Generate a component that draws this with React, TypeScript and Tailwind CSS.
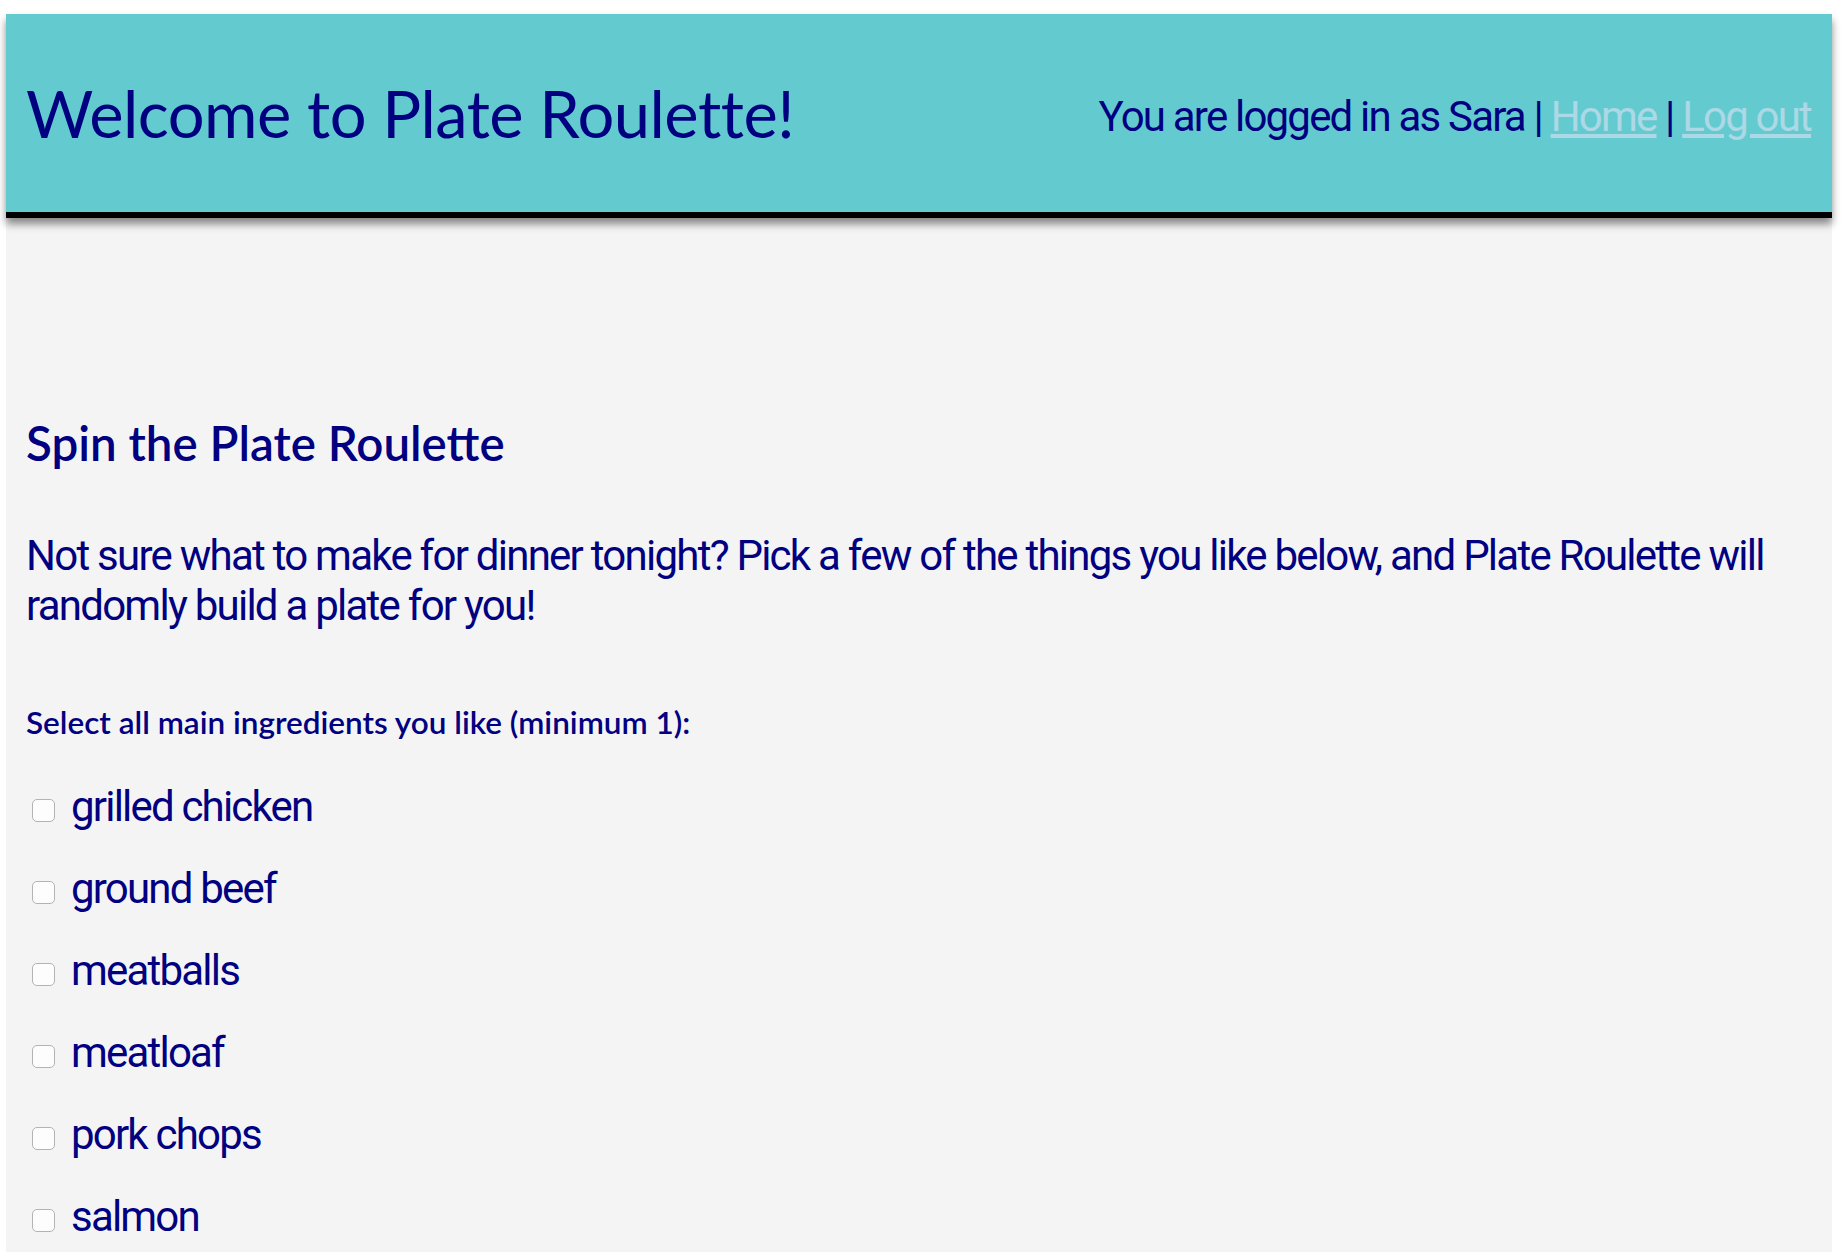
const ingredients = [
  "grilled chicken",
  "ground beef",
  "meatballs",
  "meatloaf",
  "pork chops",
  "salmon",
];

function IngredientOption({ label }: { label: string }) {
  return (
    <label className="flex items-start gap-[16px] h-[48px] pl-[6px]">
      <input
        type="checkbox"
        className="appearance-none mt-[16px] w-[23px] h-[23px] shrink-0 rounded-[5px] border border-[#b3b3b3] bg-[#fdfdfd]"
      />
      <span className="font-['Roboto',sans-serif] text-[42px] leading-[48px] tracking-[-1.8px] text-[#000080]">
        {label}
      </span>
    </label>
  );
}

export default function App() {
  return (
    <div className="min-h-screen bg-white pt-[14px] pl-[6px] pr-[10px]">
      <div className="bg-[#f4f4f4] min-h-[1238px]">
        <header className="relative z-10 flex items-center justify-between h-[204px] bg-[#63cbcf] border-b-[6px] border-black pl-5 pr-[21px] shadow-[0_6px_8px_rgba(0,0,0,0.45)]">
          <h1 className="font-['Lato',sans-serif] text-[65px] leading-none text-[#000080] tracking-[-0.5px]">
            Welcome to Plate Roulette!
          </h1>
          <p className="mt-[6px] font-['Roboto',sans-serif] text-[42px] text-[#000080] tracking-[-1.8px]">
            You are logged in as Sara |{" "}
            <a href="#" className="text-[#add8e6] underline">
              Home
            </a>{" "}
            |{" "}
            <a href="#" className="text-[#add8e6] underline">
              Log out
            </a>
          </p>
        </header>

        <main className="px-5 pt-[196px]">
          <h2 className="font-['Lato',sans-serif] font-semibold text-[47.5px] leading-[1.2] text-[#000080]">
            Spin the Plate Roulette
          </h2>
          <p className="mt-[60px] font-['Roboto',sans-serif] text-[42px] leading-[50px] tracking-[-1.75px] text-[#000080]">
            Not sure what to make for dinner tonight? Pick a few of the things
            you like below, and Plate Roulette will randomly build a plate for
            you!
          </p>
          <form className="mt-[73px]">
            <p className="font-['Lato',sans-serif] font-semibold text-[31.5px] leading-[1.2] text-[#000080]">
              Select all main ingredients you like (minimum 1):
            </p>
            <div className="mt-[41px] flex flex-col gap-[34px]">
              {ingredients.map((item) => (
                <IngredientOption key={item} label={item} />
              ))}
            </div>
          </form>
        </main>
      </div>
    </div>
  );
}
